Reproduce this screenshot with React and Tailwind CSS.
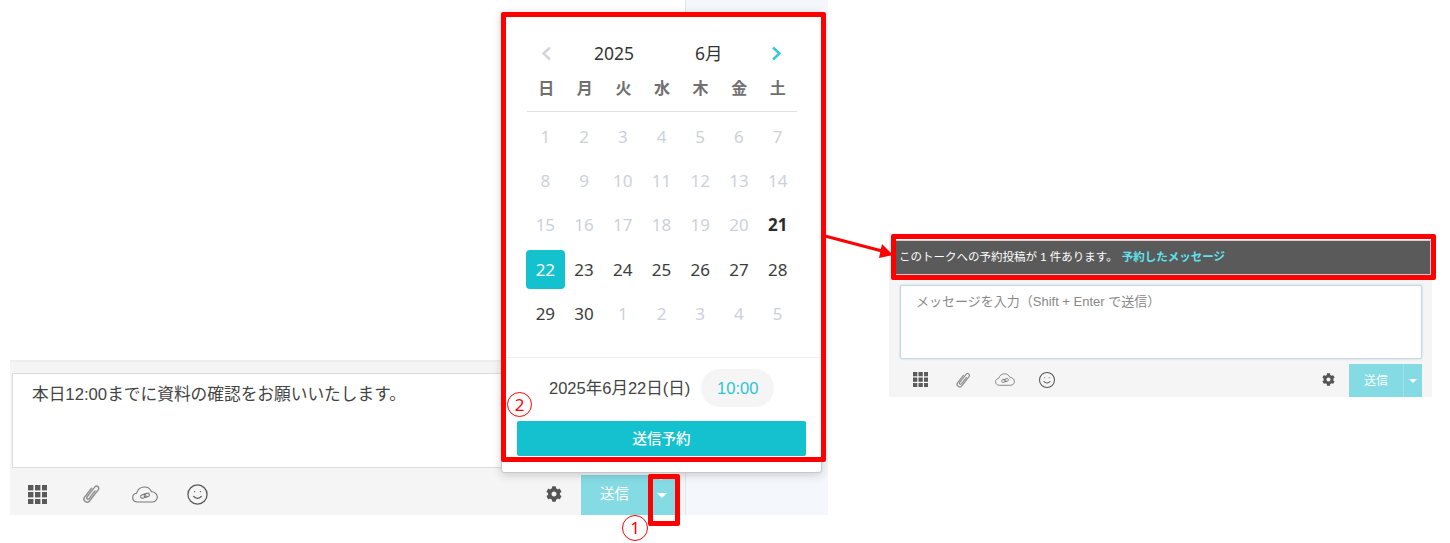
import React from 'react';
import { Smile } from 'lucide-react';
import { FaCog } from 'react-icons/fa';

const WEEK = ['日', '月', '火', '水', '木', '金', '土'];

const DAYS = [
    [1, 2, 3, 4, 5, 6, 7].map(d => ({ d, type: 'off' })),
    [8, 9, 10, 11, 12, 13, 14].map(d => ({ d, type: 'off' })),
    [15, 16, 17, 18, 19, 20].map(d => ({ d, type: 'off' })).concat({ d: 21, type: 'today' }),
    [{ d: 22, type: 'selected' }].concat([23, 24, 25, 26, 27, 28].map(d => ({ d, type: 'on' }))),
    [{ d: 29, type: 'on' }, { d: 30, type: 'on' }].concat([1, 2, 3, 4, 5].map(d => ({ d, type: 'off' }))),
];

const DAY_STYLE = {
    off: 'text-[#cdd0da]',
    on: 'text-[#3c3c3c]',
    today: 'text-[#2b2b2b] font-bold',
    selected: 'bg-[#14c2cf] text-white rounded-[4px]',
};

function GridIcon({ size }) {
    return (
        <svg width={size} height={size} viewBox="0 0 19 19" fill="#5a5a5a">
            {[0, 7, 14].map(y => [0, 7, 14].map(x => (
                <rect key={`${x}-${y}`} x={x} y={y} width="5.4" height="5.4" />
            )))}
        </svg>
    );
}

function ClipIcon({ size }) {
    return (
        <svg width={size} height={size} viewBox="0 0 20 20" fill="none" stroke="#8f8f8f" strokeWidth="1.2" strokeLinecap="round">
            <g transform="rotate(38 10 10)">
                <path d="M7.4 6 V15.6 C7.4 18.6 12.6 18.6 12.6 15.6 V3.6 C12.6 1 8.9 1 8.9 3.6 V14 C8.9 15.6 11.1 15.6 11.1 14 V6" />
            </g>
        </svg>
    );
}

function CloudLinkIcon({ width }) {
    return (
        <svg width={width} viewBox="0 0 26 17" fill="none" stroke="#777" strokeWidth="1.1">
            <path d="M6 16 C2.5 16 .7 13.8 .7 11.4 C.7 9.2 2.4 7.4 4.6 7.2 C5.6 3.6 8.6 1 12.4 1 C15.8 1 18.4 3 19.4 5.8 C22.8 5.8 25.3 8.2 25.3 11 C25.3 13.8 23 16 20 16 Z" />
            <rect x="8.5" y="8.6" width="5.4" height="3.4" rx="1.7" transform="rotate(-18 11 10)" />
            <rect x="12" y="7.4" width="5.4" height="3.4" rx="1.7" transform="rotate(-18 15 9)" />
        </svg>
    );
}

function Chevron({ dir, color }) {
    return (
        <svg width="11" height="15" viewBox="0 0 11 15" fill="none" stroke={color} strokeWidth="2.4">
            <polyline points={dir === 'left' ? '9,1.5 2.5,7.5 9,13.5' : '2,1.5 8.5,7.5 2,13.5'} />
        </svg>
    );
}

function Calendar() {
    return (
        <div className="absolute left-[501px] top-[12px] w-[321px] h-[461px] bg-white border border-[#c8c8c8] rounded-[3px] shadow-[0_2px_10px_rgba(0,0,0,0.18)] flex flex-col">
            <div className="flex items-center h-[30px] mt-[25px] ml-[39px] text-[17.5px] text-[#333]">
                <Chevron dir="left" color="#d2d4d8" />
                <span className="ml-[42px] w-[60px]">2025</span>
                <span className="ml-[41px] w-[60px]">6月</span>
                <div className="ml-[16px]"><Chevron dir="right" color="#35c8d6" /></div>
            </div>
            <div className="grid grid-cols-7 ml-[25px] w-[270px] mt-[9px] h-[35px] border-b border-[#dfe1e4]">
                {WEEK.map(w => (
                    <div key={w} className="text-center text-[16px] font-bold leading-[22px] text-[#707070]">{w}</div>
                ))}
            </div>
            <div className="grid grid-cols-7 ml-[24px] w-[271px] mt-[2.5px] auto-rows-[44.3px] items-center justify-items-center">
                {DAYS.flat().map((c, i) => (
                    <div key={i} className={`w-[39px] h-[39px] flex items-center justify-center text-[17px] ${DAY_STYLE[c.type]}`}>{c.d}</div>
                ))}
            </div>
            <div className="mt-[21.5px] border-t border-[#f0f0f0] flex items-center h-[58px] pl-[47px] pt-[3px] text-[16.5px] font-['Liberation_Sans','Noto_Sans_CJK_JP',sans-serif]">
                <span className="text-[#444]">2025年6月22日(日)</span>
                <span className="ml-[11px] w-[73px] h-[38px] rounded-full bg-[#f5f5f5] flex items-center justify-center text-[#2ec4d6]">10:00</span>
            </div>
            <button className="ml-[15px] mt-[6px] w-[289px] h-[35px] bg-[#14c2cf] rounded-[2px] text-white text-[14.5px] font-medium">送信予約</button>
        </div>
    );
}

function LeftComposer() {
    return (
        <div className="ml-[10px] w-[818px] h-[515px] flex shrink-0 font-['Liberation_Sans','Noto_Sans_CJK_JP',sans-serif]">
            <div className="w-[675px] pt-[360px]">
                <div className="h-[155px] bg-[#f5f5f5] border-t-2 border-[#eeeeee]">
                    <div className="ml-[2px] mt-[11px] h-[95px] bg-white border border-[#dcdcdc] border-r-0 pl-[19px] pt-[9px] text-[16.7px] leading-[24px] text-[#444]">
                        本日12:00までに資料の確認をお願いいたします。
                    </div>
                    <div className="flex items-center h-[47px] pl-[18px] pr-[10px] pt-[5px] justify-between">
                        <div className="flex items-center">
                            <GridIcon size={19} />
                            <div className="ml-[32px]"><ClipIcon size={24} /></div>
                            <div className="ml-[29px] w-[26px]"><CloudLinkIcon width={26} /></div>
                            <Smile size={23} strokeWidth={1.3} className="text-[#555] ml-[28px]" />
                        </div>
                        <div className="flex items-center h-full">
                            <FaCog size={16} className="text-[#555]" />
                            <div className="relative ml-[19px] flex h-[40px] self-end bg-[#85dbe3] text-white text-[14.5px]">
                                <span className="w-[67px] flex items-center justify-center">送信</span>
                                <span className="w-[27px] flex items-center justify-center border-l border-[#9ee3e9]">
                                    <span className="border-x-[5px] border-x-transparent border-t-[5px] border-t-white" />
                                </span>
                                <span className="absolute left-[75px] top-0 border-x-[5px] border-x-transparent border-t-[5px] border-t-white" />
                            </div>
                        </div>
                    </div>
                </div>
            </div>
            <div className="w-[143px] bg-[#f4f7fb] border-l border-[#e3e6ea]" />
        </div>
    );
}

function RightComposer() {
    return (
        <div className="ml-[61px] mt-[233px] w-[543px] h-[164px] bg-[#f5f5f5] shrink-0 flex flex-col pl-[11px] pr-[10px] font-['Liberation_Sans','Noto_Sans_CJK_JP',sans-serif]">
            <div className="-ml-[6px] -mr-[9px] mt-[7px] h-[35px] flex items-center bg-[#5a5a5a] pl-[4px] text-[11.5px] text-white border border-[#cfcfcf]">
                このトークへの予約投稿が 1 件あります。
                <span className="ml-[4px] font-bold text-[#5fe3ee]">予約したメッセージ</span>
            </div>
            <div className="mt-[10px] h-[74px] bg-white border border-[#c6d8ea] rounded-[2px] shadow-[0_0_2px_rgba(120,160,210,0.5)] pl-[15px] pt-[6px] text-[13px] leading-[20px] text-[#888]">
                メッセージを入力（Shift + Enter で送信）
            </div>
            <div className="flex items-center justify-between mt-[5px] h-[33px] pl-[13px]">
                <div className="flex items-center pb-[2px]">
                    <GridIcon size={15} />
                    <div className="ml-[25px]"><ClipIcon size={20} /></div>
                    <div className="ml-[22px] w-[20px]"><CloudLinkIcon width={20} /></div>
                    <Smile size={18} strokeWidth={1.4} className="text-[#555] ml-[23px]" />
                </div>
                <div className="flex items-center h-full">
                    <FaCog size={13} className="text-[#555] mb-[2px]" />
                    <div className="ml-[14px] flex h-full bg-[#85dbe3] text-white text-[12px]">
                        <span className="w-[54px] flex items-center justify-center">送信</span>
                        <span className="w-[19px] flex items-center justify-center border-l border-[#9ee3e9]">
                            <span className="border-x-[4px] border-x-transparent border-t-[4px] border-t-white" />
                        </span>
                    </div>
                </div>
            </div>
        </div>
    );
}

// red callouts drawn over the screenshot
function Annotations() {
    return (
        <>
            <div className="absolute left-[501px] top-[12px] w-[325px] h-[450px] border-[5px] border-[#ff0000] rounded-[2px]" />
            <div className="absolute left-[891px] top-[234px] w-[545px] h-[46px] border-[5px] border-[#ff0000] rounded-[2px]" />
            <div className="absolute left-[648px] top-[474px] w-[32px] h-[52px] border-[5px] border-[#ff0000] rounded-[2px]" />
            <svg className="absolute left-[824px] top-[232px]" width="70" height="28" viewBox="0 0 70 28">
                <line x1="1" y1="4" x2="58" y2="19" stroke="#ff0000" strokeWidth="3" />
                <polygon points="69,23 55,26 58,12" fill="#ff0000" />
            </svg>
            <div className="absolute left-[622px] top-[515px] w-[26px] h-[26px] rounded-full border border-[#ff0000] bg-white flex items-center justify-center text-[17px] text-[#ff0000]">1</div>
            <div className="absolute left-[507px] top-[392px] w-[25px] h-[25px] rounded-full border border-[#ff0000] bg-white flex items-center justify-center text-[17px] text-[#ff0000]">2</div>
        </>
    );
}

export default function App() {
    return (
        <div className="relative w-[1450px] h-[543px] bg-white overflow-hidden flex items-start font-['Noto_Sans','Noto_Sans_CJK_JP',sans-serif]">
            <LeftComposer />
            <RightComposer />
            <Calendar />
            <Annotations />
        </div>
    );
}
